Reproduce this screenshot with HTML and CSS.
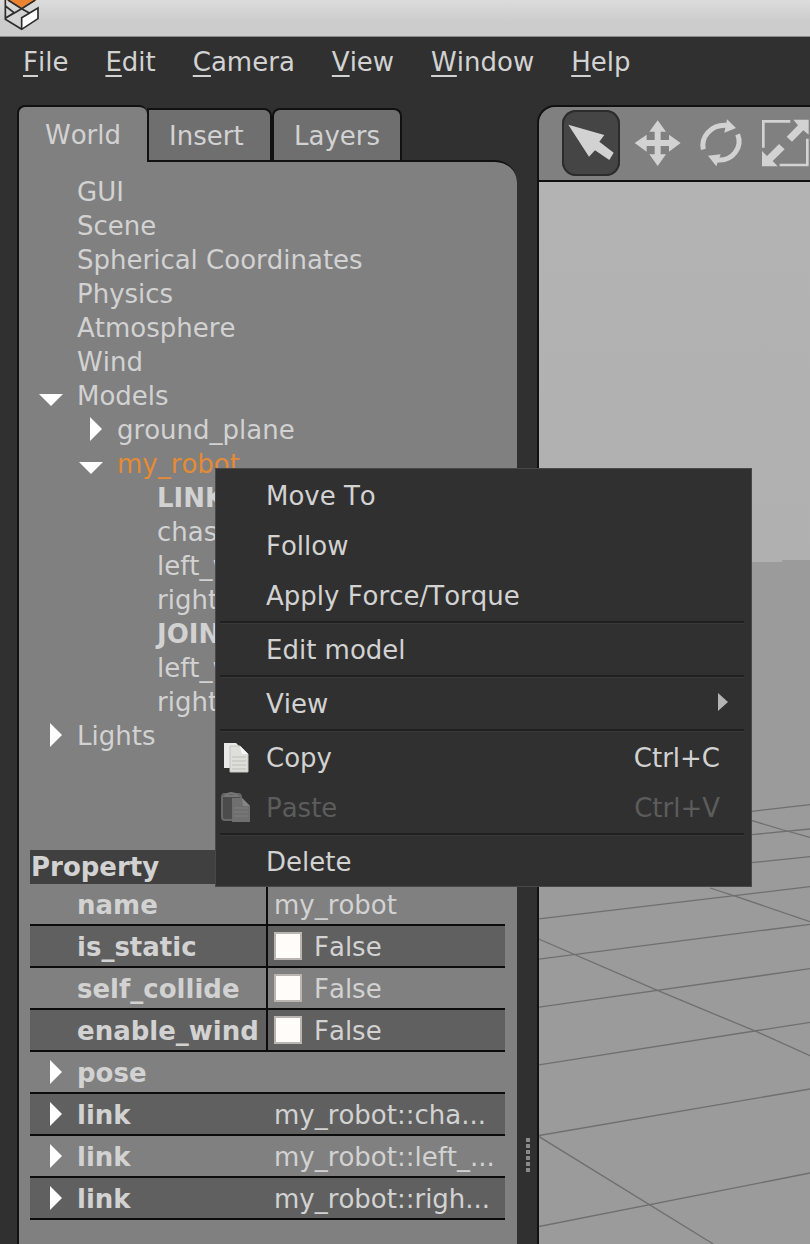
FILE: index.html
```html
<!DOCTYPE html>
<html lang="en">
<head>
<meta charset="utf-8">
<title>Gazebo</title>
<link rel="stylesheet" href="styles.css">
</head>
<body>
<svg class="defs" width="0" height="0" aria-hidden="true">
  <symbol id="arrow-right" viewBox="0 0 24 26"><path d="M11 0L23 12L11 24Z"/></symbol>
  <symbol id="arrow-down" viewBox="0 0 24 26"><path d="M0 11H24L12 23Z"/></symbol>
</svg>
<div class="app">
  <header class="titlebar">
    <svg class="logo" viewBox="0 0 126 96" aria-hidden="true">
      <path d="M16 0V58L65 88L114 56V24L65 50L24 26" fill="#d4d4d4"/>
      <path d="M20 0H110L65 28Z" fill="#ea8433"/>
      <path d="M65 56L113 26V56L65 86Z" fill="#fff"/>
      <path d="M24 0L65 26L106 0M16 0V58L65 88L114 56V24L65 53V88M17 54L65 26L88 39M17 54L40 40M16 18L42 38" fill="none" stroke="#2c2c2c" stroke-width="5"/>
    </svg>
  </header>
  <nav class="menubar">
    <button><u>F</u>ile</button>
    <button><u>E</u>dit</button>
    <button><u>C</u>amera</button>
    <button><u>V</u>iew</button>
    <button><u>W</u>indow</button>
    <button><u>H</u>elp</button>
  </nav>
  <main class="workspace">
    <aside class="side">
      <div class="tabs" role="tablist">
        <button class="tab active" role="tab" aria-selected="true">World</button>
        <button class="tab" role="tab">Insert</button>
        <button class="tab" role="tab">Layers</button>
      </div>
      <div class="panel">
        <ul class="tree">
          <li>GUI</li>
          <li>Scene</li>
          <li>Spherical Coordinates</li>
          <li>Physics</li>
          <li>Atmosphere</li>
          <li>Wind</li>
          <li><button class="toggle" aria-label="Collapse Models"><svg><use href="#arrow-down"/></svg></button>Models</li>
          <li class="level2"><button class="toggle" aria-label="Expand ground_plane"><svg><use href="#arrow-right"/></svg></button>ground_plane</li>
          <li class="level2 selected"><button class="toggle" aria-label="Collapse my_robot"><svg><use href="#arrow-down"/></svg></button>my_robot</li>
          <li class="level3 group">LINKS</li>
          <li class="level3">chassis</li>
          <li class="level3">left_w</li>
          <li class="level3">right_w</li>
          <li class="level3 group">JOINTS</li>
          <li class="level3">left_w</li>
          <li class="level3">right_w</li>
          <li><button class="toggle" aria-label="Expand Lights"><svg><use href="#arrow-right"/></svg></button>Lights</li>
        </ul>
        <table class="props">
          <thead><tr><th>Property</th><th></th></tr></thead>
          <tbody>
            <tr><th>name</th><td>my_robot</td></tr>
            <tr><th>is_static</th><td><label><input type="checkbox">False</label></td></tr>
            <tr><th>self_collide</th><td><label><input type="checkbox">False</label></td></tr>
            <tr><th>enable_wind</th><td><label><input type="checkbox">False</label></td></tr>
            <tr class="expandable"><th><button class="toggle" aria-label="Expand pose"><svg><use href="#arrow-right"/></svg></button>pose</th><td></td></tr>
            <tr class="expandable"><th><button class="toggle" aria-label="Expand link"><svg><use href="#arrow-right"/></svg></button>link</th><td>my_robot::cha...</td></tr>
            <tr class="expandable"><th><button class="toggle" aria-label="Expand link"><svg><use href="#arrow-right"/></svg></button>link</th><td>my_robot::left_...</td></tr>
            <tr class="expandable"><th><button class="toggle" aria-label="Expand link"><svg><use href="#arrow-right"/></svg></button>link</th><td>my_robot::righ...</td></tr>
          </tbody>
        </table>
      </div>
    </aside>
    <div class="splitter"><i></i><i></i><i></i><i></i><i></i><i></i></div>
    <section class="view">
      <div class="toolbar">
        <button class="tool pressed" aria-label="Select"><svg width="58" height="66" viewBox="97 60 174 198"><path d="M116 104L224 135L209 155L252 188L239 210L196 181L178 200Z"/></svg></button>
        <button class="tool" aria-label="Move"><svg width="47" height="50" viewBox="311 85 141 150"><path d="M382 92L407 126H391V151H416V135L451 160L416 186V169H391V194H407L382 229L357 194H373V169H349V186L313 160L349 135V151H373V126H357Z"/></svg></button>
        <button class="tool" aria-label="Rotate"><svg width="50" height="50" viewBox="494 82 150 150"><path d="M519 176C511 140 540 102 588 104M622 131C638 170 606 212 562 208" fill="none" stroke="#d2d2d2" stroke-width="15"/><path d="M590 86L617 112L582 126ZM533 195L571 191L558 227Z"/></svg></button>
        <button class="tool" aria-label="Scale"><svg width="51" height="50" viewBox="687 85 153 150"><path d="M781 95H700V174M832 147V226H749" fill="none" stroke="#d2d2d2" stroke-width="8"/><path d="M790 90H836V135L820 122L786 156L770 141L804 107ZM696 184L711 199L747 163L764 179L728 214L743 230H696Z"/></svg></button>
      </div>
      <svg class="scene" viewBox="0 0 271 1062" preserveAspectRatio="xMinYMin slice" aria-hidden="true">
        <defs>
          <linearGradient id="sky" x1="0" y1="0" x2="0" y2="1"><stop offset="0" stop-color="#b3b3b3"/><stop offset="1" stop-color="#b0b0b0"/></linearGradient>
        </defs>
        <rect width="271" height="382" fill="url(#sky)"/>
        <path d="M0 384L213 380H243V378H271V1062H0Z" fill="#9b9b9b"/>
        <g fill="none" stroke="#6f6f6f" stroke-width="1.3">
          <path d="M-1 737L271 704.7M-1 777.3L271 742.3M-1 825.3L271 786.7M-1 883L271 840.3M-1 953.7L271 907M-1 1044.7L271 991M213 680.7L271 674.7M213 652.7L271 647M213 629.3L271 622.7"/>
          <path d="M-1 756.7L119 808.7L217.7 849.7L271 873.7M-1 954L174.3 1062M171 706L197.7 714.7L271 739.7M213 638.7L244.3 648L271 655.3"/>
        </g>
      </svg>
    </section>
  </main>
  <div class="context" role="menu">
    <button role="menuitem"><span class="icon"></span><span class="text">Move To</span></button>
    <button role="menuitem"><span class="icon"></span><span class="text">Follow</span></button>
    <button role="menuitem"><span class="icon"></span><span class="text">Apply Force/Torque</span></button>
    <hr>
    <button role="menuitem"><span class="icon"></span><span class="text">Edit model</span></button>
    <hr>
    <button role="menuitem"><span class="icon"></span><span class="text">View</span><svg class="submenu" viewBox="0 0 10 22"><path d="M0 0L10 9L0 18Z"/></svg></button>
    <hr>
    <button role="menuitem"><span class="icon"><svg viewBox="0 0 32 34"><path d="M4 2H16L21 7V27H4Z" fill="#e9e9e7"/><path d="M10 5H20L28 13V31H10Z" fill="#dededb" stroke="#c4c4c0"/><path d="M20 5L28 13H22Z" fill="#f7f7f7"/><path d="M12 16H26M12 20H26M12 24H26M12 28H26" stroke="#bdbdb9"/></svg></span><span class="text">Copy</span><kbd>Ctrl+C</kbd></button>
    <button role="menuitem" disabled><span class="icon"><svg viewBox="0 0 32 34"><rect x="2" y="3" width="19" height="26" rx="3" fill="#4c4c4c" stroke="#686868" stroke-width="2"/><path d="M5 5Q11 -1 18 5Z" fill="#5c5c5c" stroke="#777" stroke-width="2"/><path d="M12 7H22L30 15V31H12Z" fill="#6f6f6f"/><path d="M22 7L30 15H23Z" fill="#858585"/><path d="M14 17H28M14 21H28M14 25H28" stroke="#7e7e7e"/></svg></span><span class="text">Paste</span><kbd>Ctrl+V</kbd></button>
    <hr>
    <button role="menuitem"><span class="icon"></span><span class="text">Delete</span></button>
  </div>
</div>
</body>
</html>
```

FILE: styles.css
```css
* { box-sizing: border-box; }

body {
  margin: 0;
  background: #303030;
  color: #d2d2d2;
  font: 26px/34px "DejaVu Sans", sans-serif;
  font-kerning: none;
}

button {
  margin: 0;
  padding: 0;
  border: 0;
  background: none;
  color: inherit;
  font: inherit;
  font-kerning: none;
}

.defs { position: absolute; }

.app {
  position: relative;
  display: flex;
  flex-direction: column;
  min-height: 100vh;
  overflow: hidden;
}

.titlebar {
  height: 37px;
  background: linear-gradient(#dcdcdc, #cccccc 60%);
  border-bottom: 1px solid #8a8a8a;
}

.logo { display: block; width: 42px; height: 32px; }

.menubar {
  display: flex;
  gap: 37px;
  padding: 8px 23px 26px;
}

.menubar u {
  text-decoration-thickness: 2px;
  text-underline-offset: 4px;
}

.workspace {
  flex: 1;
  display: flex;
  padding-left: 17px;
}

.side {
  flex: none;
  width: 500px;
  display: flex;
  flex-direction: column;
}

.tabs {
  display: flex;
  align-items: flex-end;
  height: 55px;
}

.tab {
  height: 52px;
  min-width: 125px;
  padding: 2px 20px 0;
  background: #6f6f6f;
  border: 2px solid #111;
  border-bottom: 0;
  border-radius: 8px 8px 0 0;
  text-align: left;
}

.tab.active + .tab { border-top-left-radius: 0; }

.tab.active {
  position: relative;
  height: 57px;
  margin-bottom: -2px;
  padding: 0 26px;
  background: #808080;
  border-right: 0;
}

.panel {
  flex: 1;
  padding: 13px 12px 24px 11px;
  background: #808080;
  border: 2px solid #111;
  border-width: 2px 0 0 2px;
  border-radius: 0 22px 0 0;
}

.panel { border-top-left-radius: 0; }

.tree {
  height: 675px;
  margin: 0;
  padding: 0;
  list-style: none;
}

.tree li {
  display: flex;
  align-items: center;
  padding-left: 47px;
}

.tree .level2 { padding-left: 87px; }
.tree .level3 { padding-left: 127px; }
.tree .group { font-weight: bold; }
.tree .selected { color: #e58a35; }

.toggle {
  flex: none;
  width: 24px;
  height: 26px;
  margin: 0 14px 0 -38px;
}

.toggle svg { display: block; width: 24px; height: 26px; fill: #fff; }

.props {
  width: 100%;
  table-layout: fixed;
  border-spacing: 0;
}

.props th, .props td {
  padding: 0;
  text-align: left;
  white-space: nowrap;
}

.props thead th { height: 34px; background: #404040; }
.props thead th:first-child { width: 238px; padding-left: 1px; }

.props tbody th, .props tbody td {
  height: 42px;
  padding-top: 2px;
  border-bottom: 2px solid #0c0c0c;
}

.props tbody th { padding-left: 47px; border-right: 2px solid #0c0c0c; }
.props tbody .expandable th { border-right: 0; }
.props tbody td { padding-left: 6px; }
.props tbody tr:nth-child(even) { background: #606060; }
.props .toggle { vertical-align: -4px; }

.props label { display: flex; align-items: center; gap: 12px; }

.props input {
  appearance: none;
  width: 28px;
  height: 28px;
  margin: 0 0 2px;
  background: #fffdfa;
  border: 2px solid #bab5b0;
}

.splitter {
  flex: none;
  width: 20px;
  display: flex;
  flex-direction: column;
  justify-content: flex-end;
  align-items: center;
  gap: 2px;
  padding: 0 0 72px 2px;
}

.splitter i { width: 4px; height: 4px; background: #8a8a8a; }

.view {
  flex: 1;
  min-width: 0;
  display: flex;
  flex-direction: column;
  overflow: hidden;
  border: 2px solid #111;
  border-width: 2px 0 0 2px;
  border-radius: 18px 0 0 0;
}

.toolbar {
  display: flex;
  align-items: center;
  gap: 14px;
  height: 75px;
  padding: 0 0 1px 23px;
  background: #808080;
  border-bottom: 2px solid #111;
}

.tool { flex: none; }
.tool svg { display: block; fill: #d2d2d2; }

.tool.pressed {
  background: #454545;
  border-radius: 14px;
  box-shadow: inset 0 0 0 2px #2c2c2c;
}

.scene { flex: 1; min-height: 0; width: 100%; display: block; }

.context {
  position: absolute;
  left: 215px;
  top: 468px;
  width: 537px;
  padding: 1px 0 0;
  background: #303030;
  border: 1px solid #484848;
}

.context button {
  display: flex;
  align-items: center;
  width: 100%;
  height: 50px;
  padding: 2px 31px 0 4px;
  text-align: left;
}

.context button:disabled { color: #5c5c5c; }
.context .icon { flex: none; width: 32px; height: 34px; margin-right: 14px; }
.context .icon svg { display: block; width: 32px; height: 34px; }
.context .text { flex: 1; }
.context kbd { font: inherit; }
.context .submenu { width: 10px; height: 22px; margin-right: -8px; fill: #b4b4b4; }

.context hr {
  height: 4px;
  margin: 0 7px 0 4px;
  border: 0;
  background: linear-gradient(#303030 1px, #202020 1px, #202020 3px, #383838 3px);
}
```
